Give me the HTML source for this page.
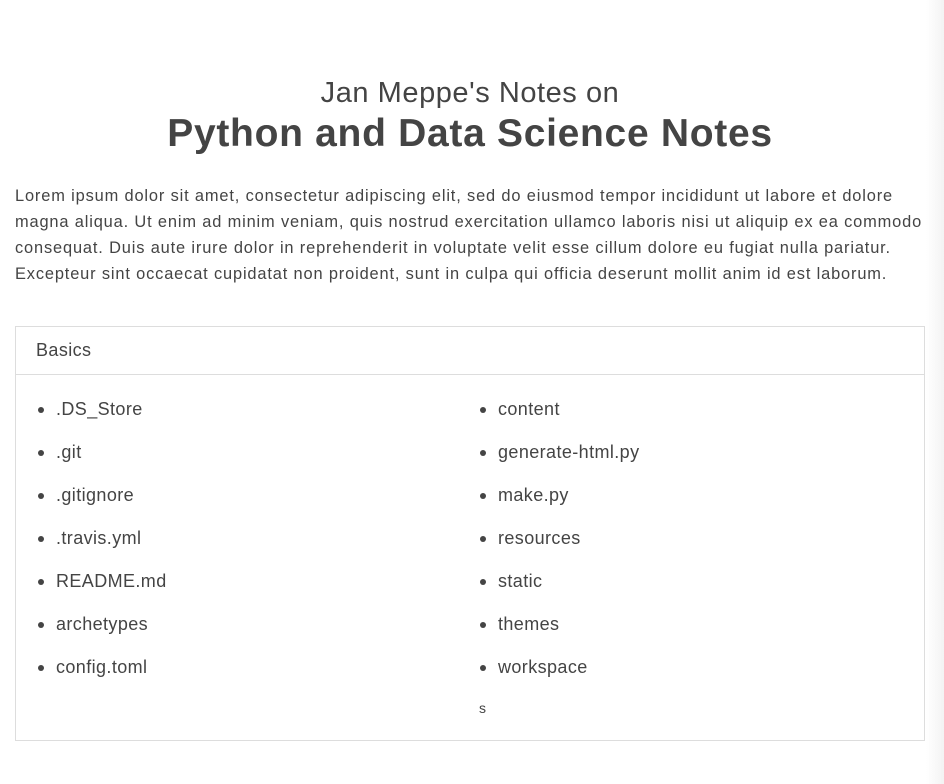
<!DOCTYPE html>
<html><head><meta charset="utf-8"><style>
html,body{margin:0;padding:0;background:#fff;}
body{width:944px;height:784px;overflow:hidden;position:relative;font-family:"Liberation Sans",sans-serif;color:#444;}
.edge{position:absolute;right:0;top:0;width:18px;height:784px;background:linear-gradient(to right,#fff,#f3f3f3);}
.t1{position:absolute;left:0;width:940px;top:75px;text-align:center;font-size:29px;line-height:36px;letter-spacing:0.55px;}
.t2{position:absolute;left:0;width:940px;top:111px;text-align:center;font-size:39px;font-weight:bold;line-height:46px;letter-spacing:0.7px;}
.p{position:absolute;left:15px;top:183px;font-size:16.4px;line-height:26px;white-space:nowrap;letter-spacing:0.85px;}
.box{position:absolute;left:15px;top:326px;width:908px;height:413px;border:1px solid #ddd;}
.hd{height:47px;border-bottom:1px solid #ddd;font-size:18px;line-height:47px;padding-left:20px;letter-spacing:0.4px;}
.col{position:absolute;top:61px;font-size:18px;letter-spacing:0.4px;}
.col div{height:43px;line-height:43px;position:relative;padding-left:20px;}
.col div:before{content:"";position:absolute;left:2px;top:19px;width:6px;height:6px;border-radius:50%;background:#444;}
.s{position:absolute;left:463px;top:373px;font-size:14px;}
</style></head><body>
<div class="edge"></div>
<div class="t1">Jan Meppe's Notes on</div>
<div class="t2">Python and Data Science Notes</div>
<div class="p">Lorem ipsum dolor sit amet, consectetur adipiscing elit, sed do eiusmod tempor incididunt ut labore et dolore<br>magna aliqua. Ut enim ad minim veniam, quis nostrud exercitation ullamco laboris nisi ut aliquip ex ea commodo<br>consequat. Duis aute irure dolor in reprehenderit in voluptate velit esse cillum dolore eu fugiat nulla pariatur.<br>Excepteur sint occaecat cupidatat non proident, sunt in culpa qui officia deserunt mollit anim id est laborum.</div>
<div class="box">
<div class="hd">Basics</div>
<div class="col" style="left:20px"><div>.DS_Store</div><div>.git</div><div>.gitignore</div><div>.travis.yml</div><div>README.md</div><div>archetypes</div><div>config.toml</div></div>
<div class="col" style="left:462px"><div>content</div><div>generate-html.py</div><div>make.py</div><div>resources</div><div>static</div><div>themes</div><div>workspace</div></div>
<div class="s">s</div>
</div>
</body></html>
